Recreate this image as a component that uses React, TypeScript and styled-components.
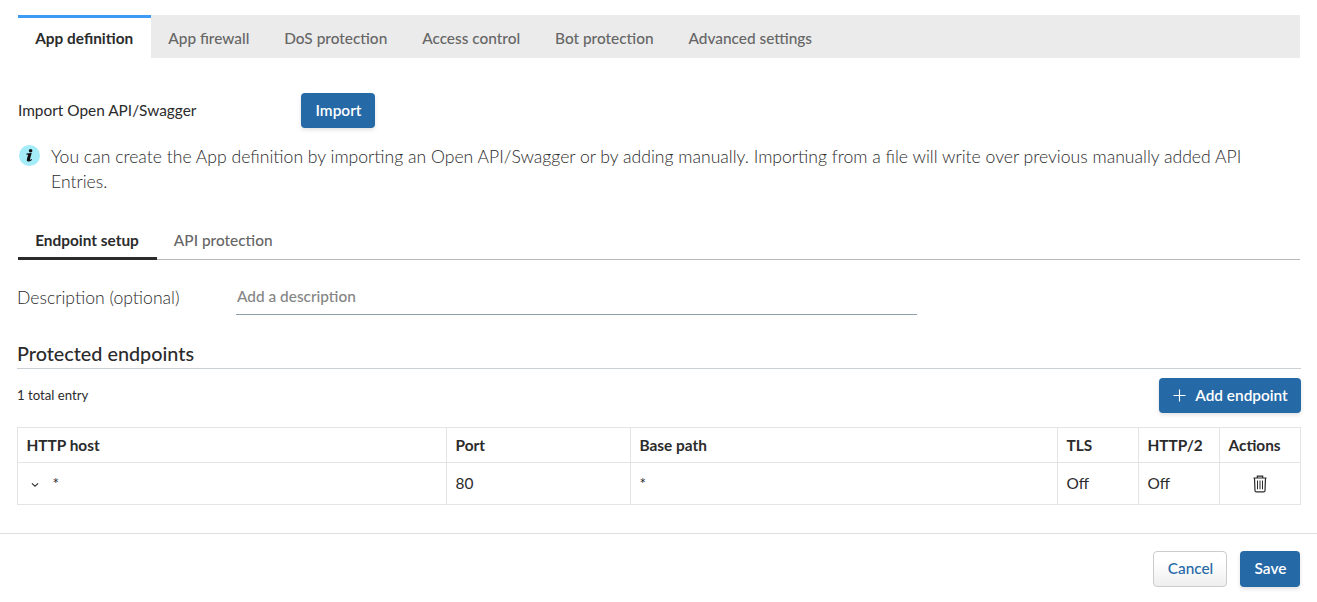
import React from "react";
import styled, { createGlobalStyle } from "styled-components";

const GlobalStyle = createGlobalStyle`
  *, *::before, *::after { box-sizing: border-box; }
  body {
    margin: 0;
    background: #fff;
    color: #2b2b2c;
    font-family: Lato, Carlito, sans-serif;
    font-size: 15.4px;
    -webkit-font-smoothing: antialiased;
  }
  button, input { font-family: inherit; }
`;

const Page = styled.main`
  display: flex;
  flex-direction: column;
  height: 602px;
  overflow: hidden;
`;

const Content = styled.div`
  display: flex;
  flex-direction: column;
  height: 533px;
  padding: 15px 16px 0 17px;
`;

const TabBar = styled.nav`
  display: flex;
  height: 43px;
  margin: 0 1px;
  background: #ebebeb;
`;

const Tab = styled.button<{ $active?: boolean }>`
  height: 43px;
  padding: ${(p) => (p.$active ? "0 17.7px 1px 17.2px" : "2px 17.5px 0 17.4px")};
  border: 0;
  border-top: ${(p) => (p.$active ? "3px solid #3d9bf5" : "0")};
  background: ${(p) => (p.$active ? "#fff" : "transparent")};
  color: ${(p) => (p.$active ? "#2b2b2c" : "#666")};
  font-size: 15.4px;
  font-weight: ${(p) => (p.$active ? 700 : 500)};
  white-space: nowrap;
`;

const ImportRow = styled.div`
  display: flex;
  align-items: center;
  margin: 35px 1px 0;
`;

const ImportLabel = styled.span`
  width: 283px;
  padding-bottom: 2px;
`;

const Button = styled.button<{ $width: number; $height?: number; $plain?: boolean }>`
  display: flex;
  align-items: center;
  justify-content: center;
  gap: 9px;
  width: ${(p) => p.$width}px;
  height: ${(p) => p.$height ?? 35}px;
  padding: 0 0 2px 1px;
  border: ${(p) => (p.$plain ? "1px solid #ccc" : "0")};
  border-radius: 4px;
  background: ${(p) => (p.$plain ? "linear-gradient(#fff 30%, #eee)" : "#2669a7")};
  color: ${(p) => (p.$plain ? "#2669a7" : "#fff")};
  font-size: 15.4px;
  font-weight: ${(p) => (p.$plain ? 500 : 600)};
  white-space: nowrap;
  box-shadow: ${(p) => (p.$plain ? "none" : "0 2px 4px rgba(0, 0, 0, 0.12)")};
`;

const Notice = styled.div`
  display: flex;
  gap: 11px;
  margin: 16px 40px 0 2px;
  & > svg { flex: none; margin-top: 1px; }
`;

const NoticeText = styled.p`
  margin: 0;
  font-size: 17.6px;
  font-weight: 300;
  line-height: 25px;
`;

const SubTabBar = styled.nav`
  display: flex;
  height: 38px;
  margin: 28px 1px 0;
  box-shadow: inset 0 -1px #b7b7b9;
`;

const SubTab = styled.button<{ $active?: boolean }>`
  height: 38px;
  padding: ${(p) => (p.$active ? "1px 17.7px 0 17.2px" : "0 17.5px 2px 17.3px")};
  border: 0;
  border-bottom: ${(p) => (p.$active ? "3px solid #2b2b2c" : "0")};
  background: transparent;
  color: ${(p) => (p.$active ? "#2b2b2c" : "#666")};
  font-size: 15.4px;
  font-weight: ${(p) => (p.$active ? 700 : 500)};
  white-space: nowrap;
`;

const DescriptionRow = styled.label`
  display: flex;
  align-items: center;
  height: 35px;
  margin-top: 20px;
`;

const DescriptionLabel = styled.span`
  width: 219px;
  font-size: 17.6px;
  font-weight: 300;
`;

const DescriptionInput = styled.input`
  width: 681px;
  height: 35px;
  padding: 0 1px 3px;
  border: 0;
  border-bottom: 1px solid #8e9fa9;
  outline: 0;
  background: transparent;
  font-size: 15.4px;
  font-weight: 500;
  &::placeholder { color: #858585; opacity: 1; }
`;

const SectionTitle = styled.h2`
  height: 30px;
  margin: 24px 0 0;
  border-bottom: 1px solid #cad0d4;
  font-size: 19.8px;
  font-weight: 500;
  line-height: 28px;
`;

const ListHeader = styled.div`
  display: flex;
  align-items: center;
  justify-content: space-between;
  margin: 9px 0 14px;
  font-size: 13.2px;
`;

const EntryCount = styled.span`
  padding-bottom: 2px;
`;

const Table = styled.div`
  display: grid;
  grid-template-columns: 430px 184px 427px 81px 81px 81px;
  grid-template-rows: 36px 42px;
`;

const Cell = styled.div<{ $head?: boolean; $first?: boolean; $center?: boolean }>`
  display: flex;
  align-items: center;
  justify-content: ${(p) => (p.$center ? "center" : "flex-start")};
  padding: ${(p) => (p.$center ? "1px 0 0" : "0 0 1px 8.5px")};
  border: solid #e4e4e5;
  border-width: ${(p) => (p.$head ? 1 : 0)}px 1px 1px ${(p) => (p.$first ? 1 : 0)}px;
  font-weight: ${(p) => (p.$head ? 700 : 400)};
`;

const Expander = styled.span`
  display: flex;
  margin: 4px 13.5px 0 4.5px;
`;

const Footer = styled.footer`
  display: flex;
  justify-content: flex-end;
  gap: 13px;
  height: 69px;
  padding: 17px 17px 0;
  border-top: 1px solid #dededf;
`;

const InfoIcon = () => (
  <svg width="21" height="21" viewBox="0 0 21 21">
    <circle cx="10.5" cy="10.5" r="10.5" fill="#a5ecf9" />
    <circle cx="11.6" cy="5.8" r="1.8" fill="#111" />
    <path
      d="M7.4 8.4L12.7 8.1L11 14.2Q10.8 15.2 12.8 14.1L13 14.9Q10.8 16.7 9 16.5Q7.3 16.2 7.9 14.1L9.1 9.8L7.3 9.5Z"
      fill="#111"
    />
  </svg>
);

const PlusIcon = () => (
  <svg width="13" height="15" viewBox="0 -2 13 15" fill="none" stroke="#fff" strokeWidth="1.1">
    <path d="M6.5 .5v12M.5 6.5h12" />
  </svg>
);

const ChevronIcon = () => (
  <svg width="8" height="6" viewBox="0 0 8 6" fill="none" stroke="#2b2b2c" strokeWidth="1.1">
    <path d="M.9 1.3L4 4.2L7.1 1.3" />
  </svg>
);

const TrashIcon = () => (
  <svg width="14" height="18" viewBox="0 0 14 18" fill="none" stroke="#2b2b2c" strokeWidth="1.2">
    <path d="M.4 3h13.2M4.3 3V1.1h5.4V3M1.5 3l.5 12.7q.1 1.2 1.2 1.2h7.6q1.1 0 1.2-1.2L12.5 3" />
    <path d="M4.5 5.5v8.8M7 5.5v8.8M9.5 5.5v8.8" strokeWidth="1" />
  </svg>
);

const tabs = ["App definition", "App firewall", "DoS protection", "Access control", "Bot protection", "Advanced settings"];
const columns = ["HTTP host", "Port", "Base path", "TLS", "HTTP/2", "Actions"];

export default function App() {
  return (
    <Page>
      <GlobalStyle />
      <Content>
        <TabBar>
          {tabs.map((t, i) => (
            <Tab key={t} $active={i === 0}>{t}</Tab>
          ))}
        </TabBar>
        <ImportRow>
          <ImportLabel>Import Open API/Swagger</ImportLabel>
          <Button $width={74}>Import</Button>
        </ImportRow>
        <Notice>
          <InfoIcon />
          <NoticeText>
            You can create the App definition by importing an Open API/Swagger or by adding manually. Importing from a
            file will write over previous manually added API Entries.
          </NoticeText>
        </Notice>
        <SubTabBar>
          <SubTab $active>Endpoint setup</SubTab>
          <SubTab>API protection</SubTab>
        </SubTabBar>
        <DescriptionRow>
          <DescriptionLabel>Description (optional)</DescriptionLabel>
          <DescriptionInput placeholder="Add a description" />
        </DescriptionRow>
        <SectionTitle>Protected endpoints</SectionTitle>
        <ListHeader>
          <EntryCount>1 total entry</EntryCount>
          <Button $width={142}>
            <PlusIcon />
            Add endpoint
          </Button>
        </ListHeader>
        <Table>
          {columns.map((c, i) => (
            <Cell key={c} $head $first={i === 0}>{c}</Cell>
          ))}
          <Cell $first>
            <Expander><ChevronIcon /></Expander>*
          </Cell>
          <Cell>80</Cell>
          <Cell>*</Cell>
          <Cell>Off</Cell>
          <Cell>Off</Cell>
          <Cell $center><TrashIcon /></Cell>
        </Table>
      </Content>
      <Footer>
        <Button $width={74} $height={36} $plain>Cancel</Button>
        <Button $width={60} $height={36}>Save</Button>
      </Footer>
    </Page>
  );
}
